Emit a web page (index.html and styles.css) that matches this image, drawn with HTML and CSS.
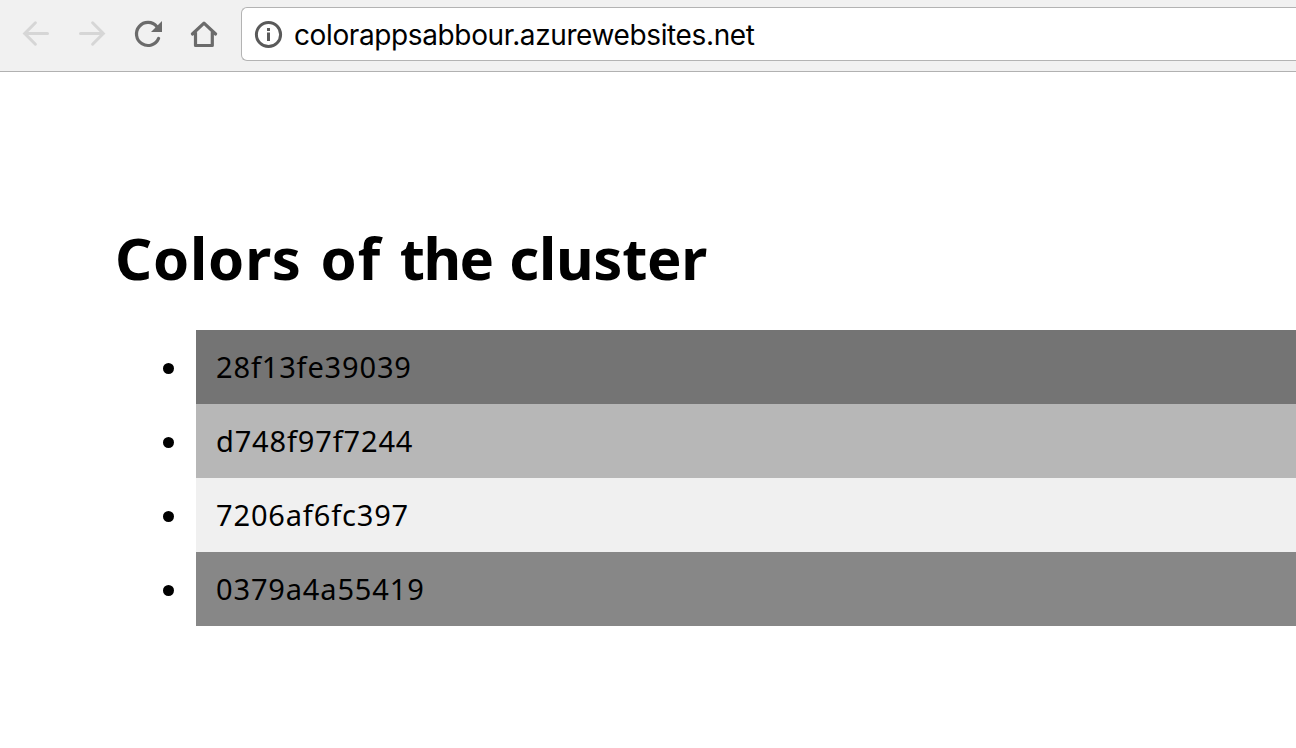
FILE: index.html
```html
<!DOCTYPE html>
<html lang="en">
<head>
<meta charset="utf-8">
<title>Colors of the cluster</title>
<link rel="stylesheet" href="styles.css">
</head>
<body>
<header class="toolbar">
  <nav class="nav">
    <svg class="icon disabled" viewBox="0 0 28 28"><path d="M13.4 2.8 L2.7 13.5 L13.4 24.2 M2.7 13.5 H25.5" /></svg>
    <svg class="icon disabled" viewBox="0 0 28 28"><path d="M14.6 2.8 L25.3 13.5 L14.6 24.2 M25.3 13.5 H2.5" /></svg>
    <svg class="icon" viewBox="0 0 28 28"><path class="arc" d="M22.9 6.7 A11.5 11.5 0 1 0 24.6 18.4" /><path class="solid" d="M28 1 V12 H17 Z" /></svg>
    <svg class="icon home" viewBox="0 0 28 28"><path d="M2.4 14 L14 3.2 L25.6 14 M5.5 12.5 V25.5 H22.3 V12.5" /></svg>
  </nav>
  <div class="address">
    <svg class="info" viewBox="0 0 28 28"><circle cx="14.5" cy="14.5" r="12.1" /><path d="M14.5 12.5 V21 M14.5 8 V11" /></svg>
    <span class="url">colorappsabbour.azurewebsites.net</span>
  </div>
</header>
<main class="page">
  <h1 class="title"><span class="wide">Colors of </span><span class="tight">the </span><span class="snug">cluster</span></h1>
  <ul class="colors">
    <li class="color dark"><span class="id">28f13fe39039</span></li>
    <li class="color silver"><span class="id">d748f97f7244</span></li>
    <li class="color light"><span class="id">7206af6fc397</span></li>
    <li class="color gray"><span class="id">0379a4a55419</span></li>
  </ul>
</main>
</body>
</html>
```
FILE: styles.css
```css
* { box-sizing: border-box; }
body { margin: 0; height: 748px; overflow: hidden; background: #fff; color: #000; font-family: "Noto Sans", sans-serif; }
.toolbar { display: flex; height: 72px; padding: 7px 0 10px 22px; background: #f1f1f1; border-bottom: 1px solid #b1b1b1; }
.nav { display: flex; align-items: center; gap: 28px; width: 219px; flex: none; }
.icon { width: 28px; height: 28px; flex: none; overflow: visible; fill: none; stroke: #6b6b6b; stroke-width: 3.2; }
.icon.disabled { stroke: #d6d6d6; stroke-width: 3; stroke-linecap: round; }
.icon.home { stroke-linejoin: round; stroke-linecap: round; }
.icon .arc { stroke-linecap: round; }
.icon .solid { fill: #6b6b6b; stroke: none; }
.address { display: flex; align-items: center; flex: 1; height: 54px; padding-left: 12px; background: #fff; border: 1px solid #b3b3b3; border-right: 0; border-radius: 6px 0 0 6px; }
.info { width: 28px; height: 28px; margin-right: 12px; overflow: visible; fill: none; stroke: #5a5a5a; stroke-width: 3; }
.url { padding-top: 2px; font: 28px/40px Inter, sans-serif; letter-spacing: -0.38px; white-space: nowrap; }
.page { padding: 146px 0 0 115px; }
.title { margin: 0 0 32px; font-size: 58px; line-height: 80px; font-weight: 700; word-spacing: 3px; }
.wide { letter-spacing: 0.78px; }
.tight { letter-spacing: -1.5px; }
.snug { letter-spacing: -0.3px; }
.colors { margin: 0; padding: 0 0 0 81px; list-style: none; }
.color { display: flex; align-items: center; height: 74px; padding-left: 20px; font-size: 29px; line-height: 40px; letter-spacing: 0.85px; }
.color::before { content: ""; width: 11px; height: 11px; margin: 3px 42px 0 -53px; border-radius: 50%; background: #000; }
.dark { background: #747474; }
.silver { background: #b7b7b7; }
.light { background: #f0f0f0; }
.gray { background: #878787; }
```
